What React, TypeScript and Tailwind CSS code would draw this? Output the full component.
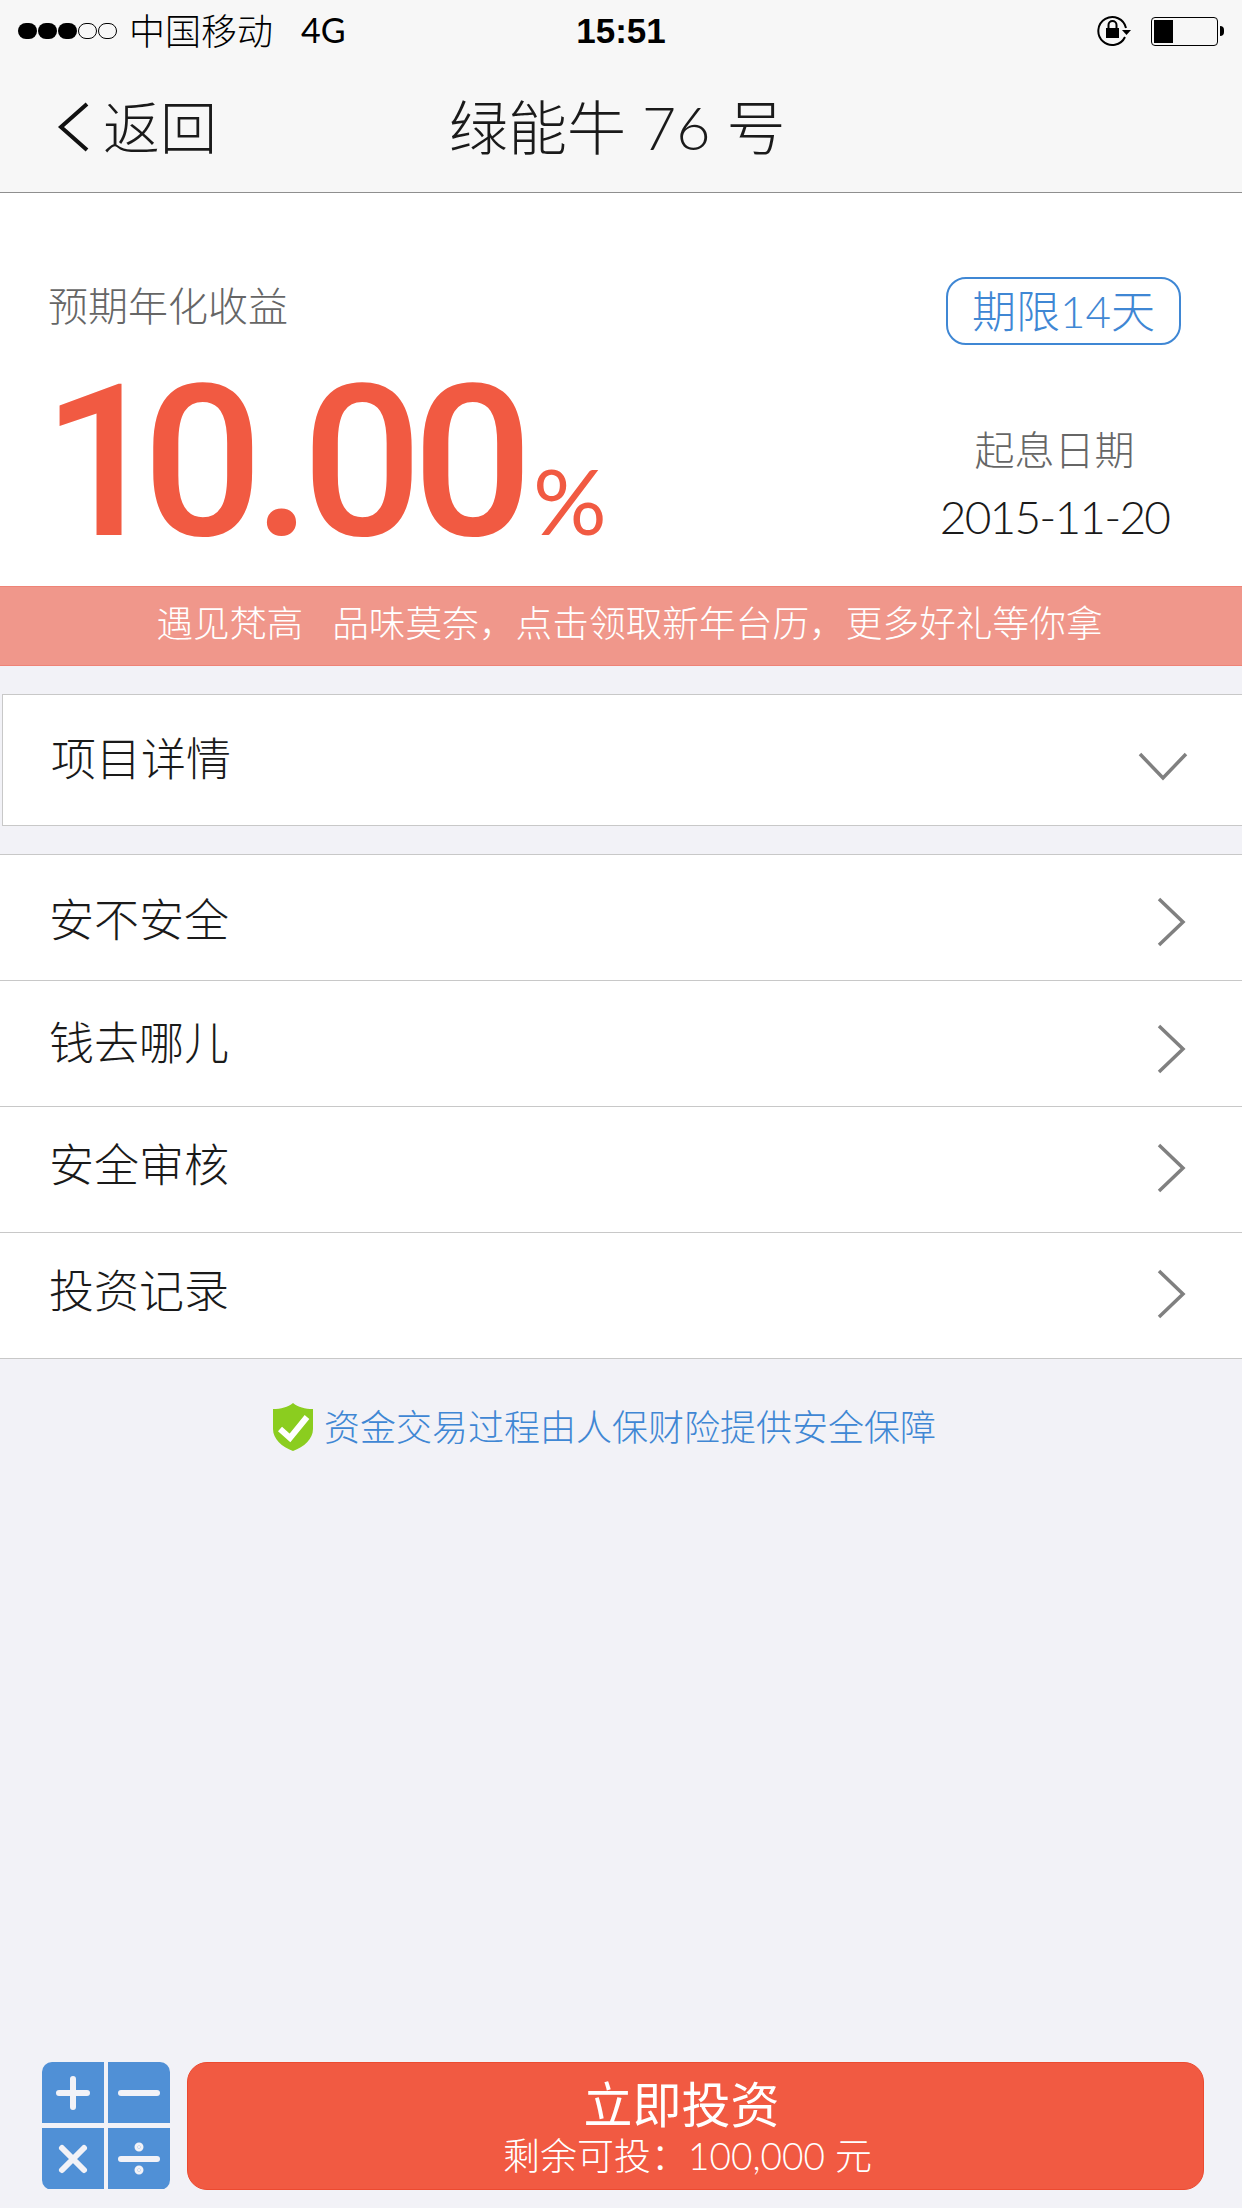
const CJK = "font-['Lato','Noto_Sans_CJK_SC',sans-serif]";

const ROWS = [
  { label: "安不安全", rowClass: "pt-[9px]", textClass: "-mt-[3px]" },
  { label: "钱去哪儿", rowClass: "pt-[10px]", textClass: "-mt-[9px]" },
  { label: "安全审核", rowClass: "pb-[4px]", textClass: "-mt-[3px]" },
  { label: "投资记录", rowClass: "pb-[4px]", textClass: "-mt-[3px]" },
];

const SignalDots = () => (
  <div className="flex items-center gap-[1px]">
    {[0, 1, 2].map((i) => (
      <span key={i} className="h-[16px] w-[19px] rounded-full bg-black" />
    ))}
    {[0, 1].map((i) => (
      <span key={i} className="h-[16px] w-[19px] rounded-full border border-black" />
    ))}
  </div>
);

const LockIcon = () => (
  <svg width="36" height="32" viewBox="0 0 36 32" fill="none">
    <path d="M28 22a14 14 0 1 1 1-9" stroke="#000" strokeWidth="2" />
    <path d="M25 15h9l-4.500 5z" fill="#000" />
    <rect x="9" y="13" width="13" height="10" fill="#000" />
    <path d="M11.500 13V10a4 4 0 0 1 8 0v3" stroke="#000" strokeWidth="2" />
  </svg>
);

const Battery = () => (
  <div className="flex items-center gap-[2px]">
    <div className="h-[29px] w-[67px] rounded-[4px] border border-black p-[2px]">
      <div className="h-full w-[19px] bg-black" />
    </div>
    <span className="h-[10px] w-[4px] rounded-r-full bg-black" />
  </div>
);

const Chevron = () => (
  <svg width="30" height="50" viewBox="0 0 30 50" fill="none">
    <path d="M3 2l24 23L3 48" stroke="#808080" strokeWidth="3.500" />
  </svg>
);

const Shield = () => (
  <svg width="42" height="50" viewBox="0 0 42 50">
    <path d="M21 1c5 4 12 6 20 6v20c0 10-9 18-20 22C10 45 1 37 1 27V7c8 0 15-2 20-6z" fill="#8bcd1f" />
    <path d="M8 27l10 9 17-21" fill="none" stroke="#fff" strokeWidth="6" />
  </svg>
);

const CalcTile = ({ op }: { op: "plus" | "minus" | "times" | "div" }) => (
  <div className="flex h-[61px] items-center justify-center bg-[#5090d6]">
    <svg width="44" height="44" viewBox="0 0 44 44" stroke="#f2f2f7" strokeWidth="6" strokeLinecap="round" fill="#f2f2f7">
      {op === "plus" && <path d="M22 8v28M8 22h28" />}
      {op === "minus" && <path d="M4 22h36" />}
      {op === "times" && <path d="M11 11l22 22M33 11L11 33" />}
      {op === "div" && (
        <>
          <path d="M4 22h36" />
          <circle cx="22" cy="10" r="1.500" />
          <circle cx="22" cy="33" r="1.500" />
        </>
      )}
    </svg>
  </div>
);

export default function App() {
  return (
    <div className={`${CJK} flex min-h-[2208px] flex-col bg-[#f2f2f7] text-[#1a1a1a]`}>
      <header className="h-[193px] border-b border-[#8f8f8f] bg-[#f7f7f7]">
        <div className="flex h-[62px] items-center justify-between pl-[18px] pr-[18px] text-black">
          <div className="flex w-[480px] items-center gap-[12px]">
            <SignalDots />
            <span className="text-[36px] font-light">中国移动</span>
            <span className="ml-[16px] -mt-[3px] text-[34px] font-normal">4G</span>
          </div>
          <span className="text-[35px] font-bold font-['Liberation_Sans']">15:51</span>
          <div className="flex w-[480px] items-center justify-end gap-[18px]">
            <LockIcon />
            <Battery />
          </div>
        </div>
        <div className="flex h-[130px] items-center pl-[56px]">
          <svg width="34" height="50" viewBox="0 0 34 50" fill="none">
            <path d="M31 2L5 25l26 23" stroke="#111" strokeWidth="4" />
          </svg>
          <span className="ml-[13px] text-[57px] font-light leading-none">返回</span>
          <span className="ml-[232px] text-[59px] font-light leading-none">绿能牛 76 号</span>
        </div>
      </header>

      <section className="flex h-[393px] justify-between bg-white pl-[48px] pr-[61px]">
        <div className="pt-[89px]">
          <p className="text-[40px] leading-[48px] font-light text-[#666]">预期年化收益</p>
          <p className="mt-[43px] flex items-baseline font-['Roboto'] text-[212px] leading-[180px] font-medium tracking-[-10px] text-[#f15a42]">
            <span className="-ml-[6px]">
              <span className="tracking-[-20px]">1</span>0.00
            </span>
            <span className="ml-[10px] font-['Lato'] text-[92px] font-normal tracking-[-2px]">%</span>
          </p>
        </div>
        <div className="flex flex-col items-center pt-[84px]">
          <div className="flex h-[68px] w-[235px] items-center justify-center rounded-[20px] border-2 border-[#3f87d4] text-[44px] font-light text-[#3f87d4]">
            期限14天
          </div>
          <p className="mt-[81px] -ml-[18px] text-[40px] leading-[48px] font-light text-[#666]">起息日期</p>
          <p className="mt-[15px] -ml-[18px] text-[46px] leading-[56px] font-light tracking-[-1.800px] text-[#1a1a1a]">2015-11-20</p>
        </div>
      </section>

      <div className="flex h-[80px] items-center justify-center border-y border-[#ef8377] bg-[#f0978b] pb-[5px] pl-[17px] text-[36.700px] font-light text-white">
        <span>遇见梵高</span>
        <span className="ml-[29px]">品味莫奈，点击领取新年台历，更多好礼等你拿</span>
      </div>

      <div className="mt-[28px] ml-[2px] flex h-[132px] items-center justify-between border border-r-0 border-[#c8c8c8] bg-white pb-[4px] pl-[48px] pr-[54px]">
        <span className="mt-[3px] text-[45px] font-light">项目详情</span>
        <svg width="50" height="30" viewBox="0 0 50 30" fill="none" className="mt-[16px]">
          <path d="M2 3l23 24L48 3" stroke="#808080" strokeWidth="3.500" />
        </svg>
      </div>

      <ul className="mt-[28px] border-t border-[#c8c8c8] bg-white">
        {ROWS.map((row) => (
          <li key={row.label} className={`flex h-[126px] items-center justify-between border-b border-[#c8c8c8] pl-[49px] pr-[56px] ${row.rowClass}`}>
            <span className={`text-[45px] font-light ${row.textClass}`}>{row.label}</span>
            <Chevron />
          </li>
        ))}
      </ul>

      <div className="mt-[41px] flex items-center justify-center gap-[10px] pr-[34px]">
        <Shield />
        <span className="text-[36px] font-light text-[#3f87d4]">资金交易过程由人保财险提供安全保障</span>
      </div>

      <footer className="mt-auto mb-[18px] flex gap-[17px] pl-[42px] pr-[38px]">
        <div className="grid w-[128px] grid-cols-2 gap-[4px] overflow-hidden rounded-[10px]">
          <CalcTile op="plus" />
          <CalcTile op="minus" />
          <CalcTile op="times" />
          <CalcTile op="div" />
        </div>
        <button className="flex h-[128px] flex-1 flex-col items-center justify-center rounded-[20px] border border-[#ec4a30] bg-[#f15a42] text-white">
          <span className="mr-[28px] text-[49px] leading-[60px]">立即投资</span>
          <span className="mr-[16px] text-[37px] leading-[44px] font-light">剩余可投：100,000 元</span>
        </button>
      </footer>
    </div>
  );
}
